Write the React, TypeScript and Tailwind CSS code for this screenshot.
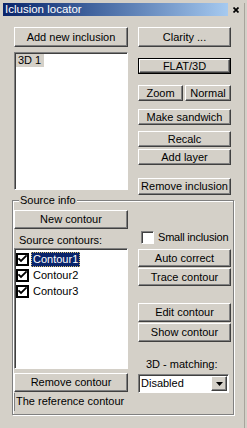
import clsx from "clsx";
import type { ReactNode } from "react";

type BtnProps = {
  children: ReactNode;
  className?: string;
  isDefault?: boolean;
};

// classic raised win98 push button, outer div takes size + margins
function Btn({ children, className = "", isDefault = false }: BtnProps) {
  return (
    <div className={clsx(className, isDefault && "border border-black")}>
      <button
        type="button"
        className="flex w-full h-full items-center justify-center whitespace-nowrap bg-[#d4d0c8] border border-t-white border-l-white border-r-[#404040] border-b-[#404040] shadow-[inset_-1px_-1px_#808080] leading-none text-[11px] text-black"
      >
        {children}
      </button>
    </div>
  );
}

function CheckMark() {
  return (
    <svg width="9" height="9" viewBox="0 0 9 9">
      <path d="M1 4 L3 6 L8 1" stroke="black" strokeWidth="1.8" fill="none" strokeLinecap="square" />
    </svg>
  );
}

function ListCheck() {
  return (
    <span className="flex items-center justify-center w-[13px] h-[13px] border-2 border-black bg-white">
      <CheckMark />
    </span>
  );
}

const contours = ["Contour1", "Contour2", "Contour3"];

export default function App() {
  return (
    <div className="w-[247px] h-[428px] bg-[#d4d0c8] overflow-hidden font-['Liberation_Sans',Arial,sans-serif] text-[11px] text-black whitespace-nowrap">
      <div className="w-[245px] h-[428px] border-r border-r-[#a8a49c]">
        {/* title bar */}
        <div className="flex items-center h-[13px] mt-[3px] pl-[3px]">
          <div className="flex items-center w-[225px] h-[13px] bg-gradient-to-r from-[#0a246a] to-[#a6caf0] pl-[2px] text-white text-[11.5px] leading-none">
            Iclusion locator
          </div>
          <svg className="ml-[5px]" width="6" height="6" viewBox="0 0 6 6">
            <path d="M0.5 0.5 L5.5 5.5 M5.5 0.5 L0.5 5.5" stroke="black" strokeWidth="1.7" />
          </svg>
        </div>

        {/* top part */}
        <div className="flex gap-[10px] pl-[14px] mt-[11px]">
          <div className="flex flex-col w-[114px]">
            <Btn className="h-[20px]">Add new inclusion</Btn>
            <div className="mt-[5px] h-[138px] bg-white border border-t-[#808080] border-l-[#808080] border-r-white border-b-white shadow-[inset_1px_1px_#404040] pl-[1px] pt-[1px]">
              <div className="w-[28px] h-[13px] bg-[#d4d0c8] pl-[2px] leading-[13px]">3D 1</div>
            </div>
          </div>
          <div className="flex flex-col w-[93px]">
            <Btn className="h-[20px]">Clarity ...</Btn>
            <Btn isDefault className="mt-[11px] h-[16px]">FLAT/3D</Btn>
            <div className="flex gap-[2px] mt-[11px] h-[16px]">
              <Btn className="w-[45px]">Zoom</Btn>
              <Btn className="w-[46px]">Normal</Btn>
            </div>
            <Btn className="mt-[8px] h-[16px]">Make sandwich</Btn>
            <Btn className="mt-[6px] h-[16px]">Recalc</Btn>
            <Btn className="mt-[2px] h-[16px]">Add layer</Btn>
            <Btn className="mt-[13px] h-[17px]">Remove inclusion</Btn>
          </div>
        </div>

        {/* Source info group */}
        <div className="relative mt-[5px] ml-[12px] w-[222px] h-[215px] border border-[#808080] shadow-[inset_1px_1px_white,1px_1px_white] pl-[1px] pr-[1px]">
          <span className="absolute left-[6px] top-[-7px] bg-[#d4d0c8] px-[1px] leading-[13px]">Source info</span>
          <div className="flex gap-[10px]">
            <div className="flex flex-col w-[114px]">
              <Btn className="mt-[9px] h-[19px]">New contour</Btn>
              <div className="mt-[5px] h-[13px] pl-[5px] leading-[13px]">Source contours:</div>
              <div className="mt-[1px] h-[121px] bg-white border border-t-[#808080] border-l-[#808080] border-r-white border-b-white shadow-[inset_1px_1px_#404040] pl-[1px] pt-[2px]">
                {contours.map((c, i) => (
                  <div key={c} className="flex items-center h-[16px] gap-[2px]">
                    <ListCheck />
                    <span
                      className={clsx(
                        "h-[15px] px-[1px] leading-[13px] border",
                        i === 0
                          ? "bg-[#0a246a] text-white border-dotted border-[#d8c070]"
                          : "border-transparent"
                      )}
                    >
                      {c}
                    </span>
                  </div>
                ))}
              </div>
              <Btn className="mt-[4px] h-[19px]">Remove contour</Btn>
              <div className="mt-[1px] h-[18px] border-l border-l-[#808080] pl-[1px] pt-[2px] leading-[13px]">
                The reference contour
              </div>
            </div>
            <div className="flex flex-col w-[93px]">
              <div className="flex items-center gap-[4px] mt-[30px] h-[13px] pl-[3px]">
                <span className="shrink-0 w-[13px] h-[13px] bg-white border border-t-[#808080] border-l-[#808080] border-r-white border-b-white shadow-[inset_1px_1px_#404040]" />
                <span className="leading-[13px] tracking-[-0.2px]">Small inclusion</span>
              </div>
              <Btn className="mt-[5px] h-[18px]">Auto correct</Btn>
              <Btn className="mt-[1px] h-[18px]">Trace contour</Btn>
              <Btn className="mt-[17px] h-[19px]">Edit contour</Btn>
              <Btn className="mt-[1px] h-[19px]">Show contour</Btn>
              <div className="mt-[16px] h-[13px] pl-[8px] leading-[13px]">3D - matching:</div>
              <div className="flex items-center mt-[3px] w-[91px] h-[19px] bg-white border border-t-[#808080] border-l-[#808080] border-r-white border-b-white shadow-[inset_1px_1px_#404040] pl-[2px] pr-[1px]">
                <span className="flex-1 leading-[13px]">Disabled</span>
                <span className="flex items-center justify-center w-[16px] h-[15px] bg-[#d4d0c8] border border-t-white border-l-white border-r-[#404040] border-b-[#404040] shadow-[inset_-1px_-1px_#808080]">
                  <svg width="7" height="4" viewBox="0 0 7 4">
                    <path d="M0 0 H7 L3.5 4 Z" fill="black" />
                  </svg>
                </span>
              </div>
            </div>
          </div>
        </div>
      </div>
    </div>
  );
}
